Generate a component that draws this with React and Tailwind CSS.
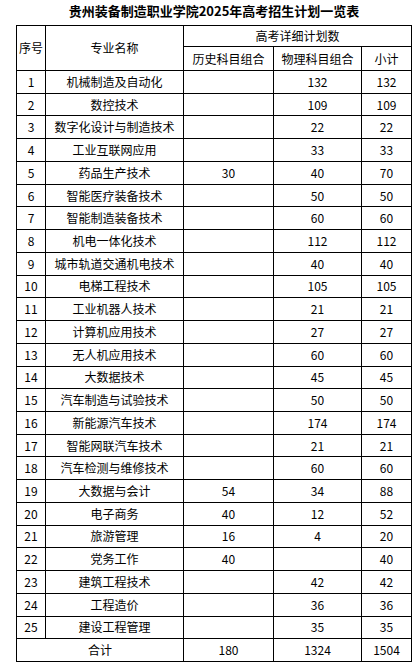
import React from "react";

const rows = [
  ["1", "机械制造及自动化", "", "132", "132"],
  ["2", "数控技术", "", "109", "109"],
  ["3", "数字化设计与制造技术", "", "22", "22"],
  ["4", "工业互联网应用", "", "33", "33"],
  ["5", "药品生产技术", "30", "40", "70"],
  ["6", "智能医疗装备技术", "", "50", "50"],
  ["7", "智能制造装备技术", "", "60", "60"],
  ["8", "机电一体化技术", "", "112", "112"],
  ["9", "城市轨道交通机电技术", "", "40", "40"],
  ["10", "电梯工程技术", "", "105", "105"],
  ["11", "工业机器人技术", "", "21", "21"],
  ["12", "计算机应用技术", "", "27", "27"],
  ["13", "无人机应用技术", "", "60", "60"],
  ["14", "大数据技术", "", "45", "45"],
  ["15", "汽车制造与试验技术", "", "50", "50"],
  ["16", "新能源汽车技术", "", "174", "174"],
  ["17", "智能网联汽车技术", "", "21", "21"],
  ["18", "汽车检测与维修技术", "", "60", "60"],
  ["19", "大数据与会计", "54", "34", "88"],
  ["20", "电子商务", "40", "12", "52"],
  ["21", "旅游管理", "16", "4", "20"],
  ["22", "党务工作", "40", "", "40"],
  ["23", "建筑工程技术", "", "42", "42"],
  ["24", "工程造价", "", "36", "36"],
  ["25", "建设工程管理", "", "35", "35"],
];

const cell =
  "flex items-center justify-center border-r border-b border-black whitespace-nowrap overflow-hidden";

export default function App() {
  return (
    <div
      className="w-[417px] h-[670px] bg-white text-black pl-[16px]"
      style={{ fontFamily: '"Noto Sans CJK SC", "Noto Sans", sans-serif' }}
    >
      <div className="w-[396px] h-[25px] text-center font-bold text-[13px] leading-[22px]">
        贵州装备制造职业学院2025年高考招生计划一览表
      </div>
      <div className="grid w-[396px] h-[637px] border-l border-t border-black grid-cols-[29px_138px_90px_88px_50px] grid-rows-[21px_24px_repeat(26,minmax(0,1fr))] text-[12px] leading-none">
        <div className={`${cell} row-span-2`}>序号</div>
        <div className={`${cell} row-span-2`}>专业名称</div>
        <div className={`${cell} col-span-3`}>高考详细计划数</div>
        <div className={cell}>历史科目组合</div>
        <div className={cell}>物理科目组合</div>
        <div className={cell}>小计</div>
        {rows.map((r) => (
          <React.Fragment key={r[0]}>
            <div className={cell}>{r[0]}</div>
            <div className={cell}>{r[1]}</div>
            <div className={cell}>{r[2]}</div>
            <div className={cell}>{r[3]}</div>
            <div className={cell}>{r[4]}</div>
          </React.Fragment>
        ))}
        <div className={`${cell} col-span-2`}>合计</div>
        <div className={cell}>180</div>
        <div className={cell}>1324</div>
        <div className={cell}>1504</div>
      </div>
    </div>
  );
}
